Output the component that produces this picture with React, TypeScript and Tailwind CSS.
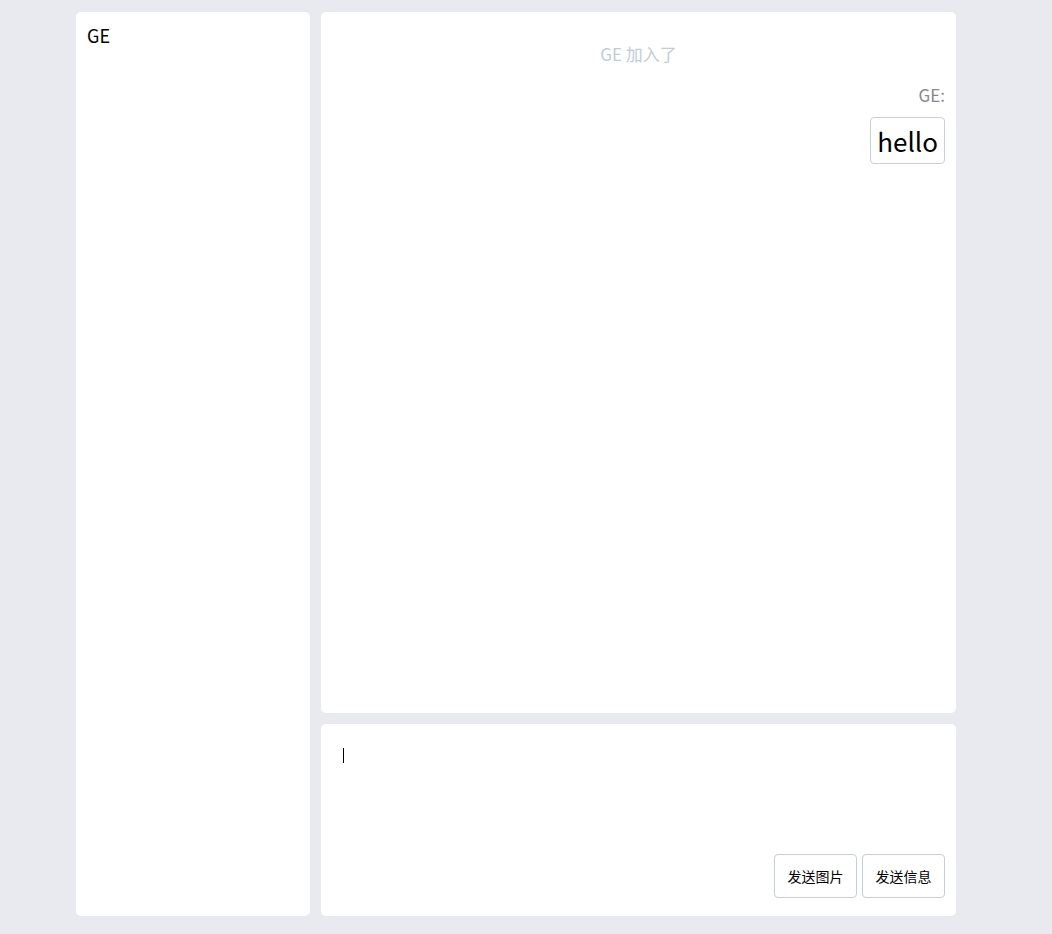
import React from "react";

const font = { fontFamily: '"Noto Sans CJK SC", "Noto Sans", sans-serif' };

function App() {
  return (
    <div className="min-h-[934px] w-full bg-[#e9eaf0] pt-[12px]" style={font}>
      <div className="ml-[76px] flex h-[904px] w-[880px] gap-[11px]">
        <div className="w-[234px] rounded-[5px] bg-white px-[11px] py-[14px]">
          <div className="text-[18px] leading-[18px] text-black">GE</div>
        </div>
        <div className="flex flex-1 flex-col gap-[11px]">
          <div className="flex-1 rounded-[5px] bg-white px-[11px] pt-[30px]">
            <div className="text-center text-[17px] leading-[24px] text-[#c1cbd9]">GE 加入了</div>
            <div className="mt-[19px] flex flex-col items-end">
              <div className="text-[17px] leading-[20px] text-[#888]">GE:</div>
              <div className="mt-[12px] rounded-[4px] border border-[#c8d0dc] px-[6px] py-[5px] text-[26px] leading-[35px] text-black">
                hello
              </div>
            </div>
          </div>
          <div className="flex h-[192px] flex-col rounded-[5px] bg-white px-[11px] pb-[18px] pt-[20px]">
            <div className="flex-1 pl-[11px]">
              <div className="mt-[4px] h-[15px] w-px bg-black" />
            </div>
            <div className="flex justify-end gap-[5px]">
              <button className="h-[44px] w-[83px] rounded-[4px] border border-[#c5cfdc] bg-white text-[14px] text-black">
                发送图片
              </button>
              <button className="h-[44px] w-[83px] rounded-[4px] border border-[#c5cfdc] bg-white text-[14px] text-black">
                发送信息
              </button>
            </div>
          </div>
        </div>
      </div>
    </div>
  );
}

export default App;
